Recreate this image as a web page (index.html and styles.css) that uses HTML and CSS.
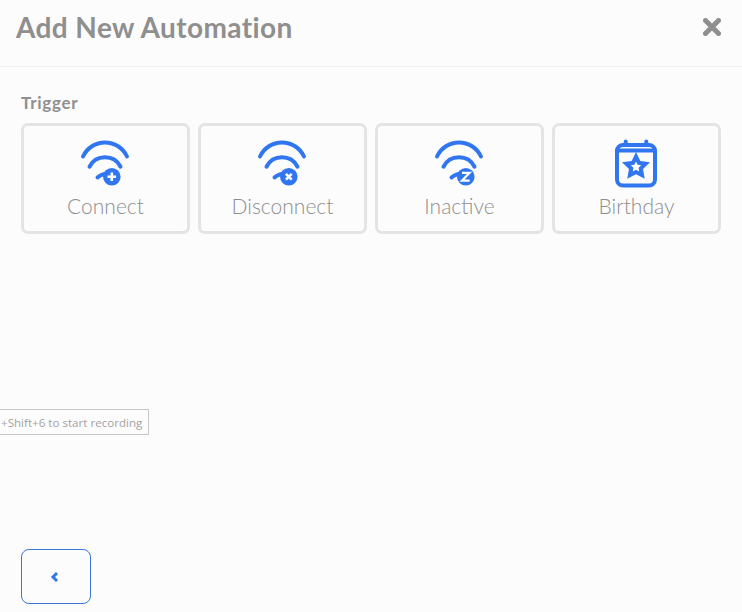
FILE: index.html
```html
<!DOCTYPE html>
<html lang="en">
<head>
  <meta charset="UTF-8" />
  <meta name="viewport" content="width=device-width, initial-scale=1.0">
  <title>Add New Automation</title>
  <link rel="stylesheet" href="styles.css">
</head>
<body>
  <div class="app">
    <header class="top">
      <h1>Add New Automation</h1>
      <button class="close" aria-label="Close">
        <svg width="18" height="18" viewBox="0 0 18 18"><path d="M2.5 2.5L15.5 15.5M15.5 2.5L2.5 15.5" fill="none" stroke="#8f8f8f" stroke-width="5" stroke-linecap="round"/></svg>
      </button>
    </header>

    <main class="content">
      <h2 class="label">Trigger</h2>
      <div class="cards">
        <div class="card">
          <svg class="icon" viewBox="0 0 60 50">
            <path class="arc" d="M8 18.5A24.2 24.2 0 0 1 52 18.5M14.5 28.7A17.5 17.5 0 0 1 45.5 28.7M22.5 39.5Q26.5 35.8 34 35.2"/>
            <circle class="dot" cx="36.8" cy="38.7" r="8.8"/>
            <path class="mark" d="M36.8 34.4V43M32.5 38.7H41.1"/>
          </svg>
          <span class="name">Connect</span>
        </div>
        <div class="card">
          <svg class="icon" viewBox="0 0 60 50">
            <path class="arc" d="M8 18.5A24.2 24.2 0 0 1 52 18.5M14.5 28.7A17.5 17.5 0 0 1 45.5 28.7M22.5 39.5Q26.5 35.8 34 35.2"/>
            <circle class="dot" cx="36.8" cy="38.7" r="8.8"/>
            <path class="mark" d="M33.9 35.8L39.7 41.6M39.7 35.8L33.9 41.6"/>
          </svg>
          <span class="name">Disconnect</span>
        </div>
        <div class="card">
          <svg class="icon" viewBox="0 0 60 50">
            <path class="arc" d="M8 18.5A24.2 24.2 0 0 1 52 18.5M14.5 28.7A17.5 17.5 0 0 1 45.5 28.7M22.5 39.5Q26.5 35.8 34 35.2"/>
            <circle class="dot" cx="36.8" cy="38.7" r="8.8"/>
            <path class="zed" d="M33 34.8H40.6L33 42.6H40.6"/>
          </svg>
          <span class="name">Inactive</span>
        </div>
        <div class="card">
          <svg class="icon" viewBox="0 0 60 50">
            <rect class="cal" x="11" y="7" width="38" height="40.5" rx="6"/>
            <path class="arc" d="M11 12.5H49M19.7 3.5V7M40.3 3.5V7"/>
            <path class="star" d="M30 14L34.3 23L44 24.3L37 31.1L38.7 40.8L30 36.2L21.3 40.8L23 31.1L16 24.3L25.7 23Z"/>
            <path class="star-in" d="M30 23.5L31.6 26.8L35.2 27.3L32.6 29.8L33.2 33.4L30 31.7L26.8 33.4L27.4 29.8L24.8 27.3L28.4 26.8Z"/>
          </svg>
          <span class="name">Birthday</span>
        </div>
      </div>
    </main>

    <footer class="bottom">
      <button class="back" aria-label="Back">
        <svg class="chev" width="10" height="12" viewBox="0 0 10 12"><path d="M7 2L3 6L7 10" fill="none" stroke="#2f76f0" stroke-width="3"/></svg>
      </button>
    </footer>

    <div class="hint">+Shift+6 to start recording</div>
  </div>
</body>
</html>
```

FILE: styles.css
```css
* {
  margin: 0;
  padding: 0;
  box-sizing: border-box;
}
body {
  font-family: 'Lato', sans-serif;
  background: #fcfcfc;
  color: #8f8f8f;
  overflow: hidden;
}
button {
  background: none;
  border: none;
  display: flex;
  align-items: center;
  justify-content: center;
}
.app {
  position: relative;
  height: 612px;
  display: flex;
  flex-direction: column;
}
.top {
  height: 67px;
  border-bottom: 1px solid #f0f0f0;
  padding: 0 21px 12px 16px;
  display: flex;
  align-items: center;
  justify-content: space-between;
}
.top h1 {
  font-size: 28px;
  font-weight: 700;
  letter-spacing: 0.4px;
  color: #8f8f8f;
}
.content {
  flex: 1;
  padding: 26px 21px 0;
}
.label {
  font-size: 17px;
  font-weight: 700;
  letter-spacing: 0.7px;
  line-height: 20px;
  margin-bottom: 10px;
}
.cards {
  display: grid;
  grid-template-columns: repeat(4, 1fr);
  gap: 8px;
}
.card {
  height: 111px;
  border: 3px solid #e4e4e4;
  border-radius: 7px;
  display: flex;
  flex-direction: column;
  align-items: center;
  padding-top: 12px;
}
.icon {
  width: 60px;
  height: 50px;
  margin-left: -1px;
}
.arc {
  fill: none;
  stroke: #2f76f0;
  stroke-width: 4;
  stroke-linecap: round;
}
.dot {
  fill: #2f76f0;
}
.mark {
  fill: none;
  stroke: #fff;
  stroke-width: 2.6;
}
.zed {
  fill: none;
  stroke: #fff;
  stroke-width: 2.2;
}
.cal {
  fill: none;
  stroke: #2f76f0;
  stroke-width: 4;
}
.star {
  fill: #2f76f0;
}
.star-in {
  fill: #fff;
}
.name {
  font-size: 21px;
  font-weight: 300;
  line-height: 24px;
  color: #8e8e8e;
  margin-top: 6px;
}
.bottom {
  padding: 0 21px 8px;
}
.back {
  width: 70px;
  height: 55px;
  border: 1px solid #3a78d8;
  border-radius: 8px;
  padding-right: 2px;
}
.hint {
  position: absolute;
  left: 0;
  top: 409px;
  width: 149px;
  height: 26px;
  border: 1px solid #c8c8c8;
  border-left: none;
  padding-left: 1px;
  font-family: 'Open Sans', sans-serif;
  font-size: 11.6px;
  line-height: 25px;
  color: #a3a3a3;
  white-space: nowrap;
}
```
